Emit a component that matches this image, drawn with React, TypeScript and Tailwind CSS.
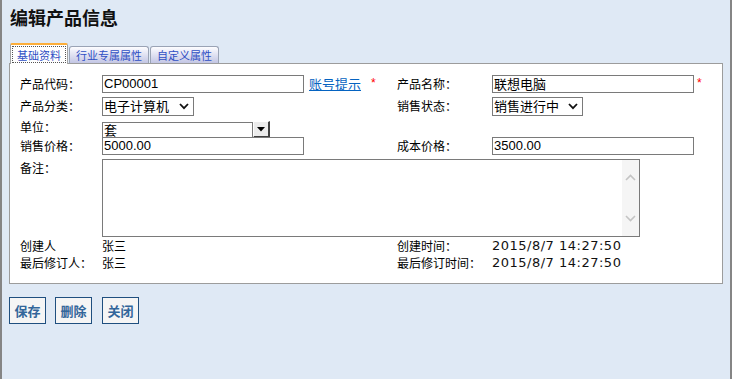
import React from "react";

const cjk = "font-['Noto_Sans_CJK_SC',sans-serif]";
const lat = "font-['Liberation_Sans','Noto_Sans_CJK_SC',sans-serif]";

function Box({ w, text, className = "" }: { w: string; text: string; className?: string }) {
  return (
    <div className={`${w} h-[18px] border border-[#7a7a7a] bg-white flex items-center pl-[1px] text-[13px] leading-[16px] text-black ${lat} ${className}`}>
      {text}
    </div>
  );
}

function Select({ w, text }: { w: string; text: string }) {
  return (
    <div className={`${w} h-[19px] border border-[#7a7a7a] bg-white flex items-center pl-[1px] pr-[4px] justify-between text-[13px] leading-[16px] text-black ${cjk}`}>
      <span>{text}</span>
      <svg width="10" height="7" viewBox="0 0 10 7">
        <path d="M1 1 L5 5.2 L9 1" fill="none" stroke="#111" strokeWidth="1.8" />
      </svg>
    </div>
  );
}

function Star({ className = "" }: { className?: string }) {
  return <span className={`text-[#ff0000] text-[12px] leading-[12px] ${lat} ${className}`}>*</span>;
}

export default function App() {
  return (
    <div className={`w-[732px] h-[379px] bg-[#dfe9f5] border-x-2 border-[#858585] ${cjk} text-[12px] text-black overflow-hidden`}>
      <div className="pl-[8px] pt-[6px] h-[29px] text-[18px] font-bold leading-[22px] text-[#111]">编辑产品信息</div>
      {/* tabs */}
      <div className="mt-[14px] ml-[8px] h-[20px] flex items-end relative z-10">
        <div className="w-[58px] h-[21px] -mb-[1px] bg-white border-t-2 border-t-[#fcae3a] border-x border-x-[#a3a3a3] rounded-t-[2px] px-[1px] pt-[1px] pb-[1px]">
          <div className="h-full border border-dotted border-[#555] flex items-center justify-center text-[11px] leading-[12px] text-[#2f4fc4]">
            基础资料
          </div>
        </div>
        <div className="ml-[1px] w-[80px] h-[17px] rounded-t-[3px] border border-b-0 border-[#9aa3b5] bg-gradient-to-b from-[#fdfdff] to-[#c3c6e4] flex items-center justify-center text-[11px] leading-[12px] text-[#2f4fc4]">
          行业专属属性
        </div>
        <div className="ml-[1px] w-[69px] h-[17px] rounded-t-[3px] border border-b-0 border-[#9aa3b5] bg-gradient-to-b from-[#fdfdff] to-[#c3c6e4] flex items-center justify-center text-[11px] leading-[12px] text-[#2f4fc4]">
          自定义属性
        </div>
      </div>
      {/* panel */}
      <div className="ml-[7px] w-[714px] h-[221px] bg-white border border-[#9c9c9c] pt-[11px] pl-[10px] flex flex-col leading-[16px]">
        {/* row 1 */}
        <div className="h-[18px] flex items-center">
          <div className="w-[82px]">产品代码：</div>
          <div className="w-[295px] flex items-center">
            <Box w="w-[202px]" text="CP00001" />
            <span className={`ml-[5px] text-[13px] leading-[16px] text-[#0563c1] underline ${cjk}`}>账号提示</span>
            <Star className="ml-[10px] -mt-[3px]" />
          </div>
          <div className="w-[95px]">产品名称：</div>
          <Box w="w-[202px]" text="联想电脑" className={cjk} />
          <Star className="ml-[3px] -mt-[3px]" />
        </div>
        {/* row 2 */}
        <div className="mt-[3px] h-[20px] flex items-center">
          <div className="w-[82px]">产品分类：</div>
          <div className="w-[295px] flex items-center">
            <Select w="w-[92px]" text="电子计算机" />
          </div>
          <div className="w-[95px]">销售状态：</div>
          <Select w="w-[91px]" text="销售进行中" />
        </div>
        {/* row 3 */}
        <div className="h-[21px] flex items-center">
          <div className="w-[82px]">单位：</div>
          <div className="self-start mt-[6px] flex items-start">
            <div className={`w-[151px] h-[17px] border border-[#7a7a7a] bg-white flex items-start pl-[1px] text-[13px] leading-[14px] ${cjk}`}>套</div>
            <div className="w-[17px] h-[17px] -mt-[1px] bg-[#ececec] border-t border-l border-t-[#ffffff] border-l-[#ffffff] border-r-2 border-b-2 border-r-[#404040] border-b-[#404040] flex items-center justify-center">
              <svg width="8" height="5" viewBox="0 0 8 5">
                <path d="M0 0 L8 0 L4 4.5 Z" fill="#000" />
              </svg>
            </div>
          </div>
        </div>
        {/* row 4 */}
        <div className="h-[18px] flex items-center">
          <div className="w-[82px]">销售价格：</div>
          <div className="w-[295px] flex items-center">
            <Box w="w-[202px]" text="5000.00" />
          </div>
          <div className="w-[95px]">成本价格：</div>
          <Box w="w-[202px]" text="3500.00" />
        </div>
        {/* row 5 */}
        <div className="mt-[4px] h-[78px] flex items-start">
          <div className="w-[82px] pt-[1px]">备注：</div>
          <div className="w-[538px] h-[78px] border border-[#7a7a7a] bg-white flex justify-end">
            <div className="w-[17px] h-full bg-[#f5f5f5] flex flex-col items-center justify-between py-[14px]">
              <svg width="11" height="7" viewBox="0 0 11 7">
                <path d="M1 6 L5.5 1.5 L10 6" fill="none" stroke="#c4c4c4" strokeWidth="1.6" />
              </svg>
              <svg width="11" height="7" viewBox="0 0 11 7">
                <path d="M1 1 L5.5 5.5 L10 1" fill="none" stroke="#c4c4c4" strokeWidth="1.6" />
              </svg>
            </div>
          </div>
        </div>
        {/* row 6 */}
        <div className="h-[17px] flex items-center">
          <div className="w-[82px]">创建人</div>
          <div className="w-[295px]">张三</div>
          <div className="w-[95px]">创建时间：</div>
          <div className="text-[13px] tracking-[0.5px] font-['DejaVu_Sans',sans-serif] text-[#111]">2015/8/7 14:27:50</div>
        </div>
        {/* row 7 */}
        <div className="h-[17px] flex items-center">
          <div className="w-[82px]">最后修订人：</div>
          <div className="w-[295px]">张三</div>
          <div className="w-[95px]">最后修订时间：</div>
          <div className="text-[13px] tracking-[0.5px] font-['DejaVu_Sans',sans-serif] text-[#111]">2015/8/7 14:27:50</div>
        </div>
      </div>
      {/* buttons */}
      <div className="mt-[13px] ml-[7px] flex">
        {["保存", "删除", "关闭"].map((t, i) => (
          <div
            key={t}
            className={`${i === 0 ? "" : i === 1 ? "ml-[9px]" : "ml-[10px]"} w-[37px] h-[27px] border border-[#1f4f7f] bg-[#f5f5f5] flex items-center justify-center text-[13px] font-bold leading-[16px] text-[#33669a]`}
          >
            {t}
          </div>
        ))}
      </div>
    </div>
  );
}
